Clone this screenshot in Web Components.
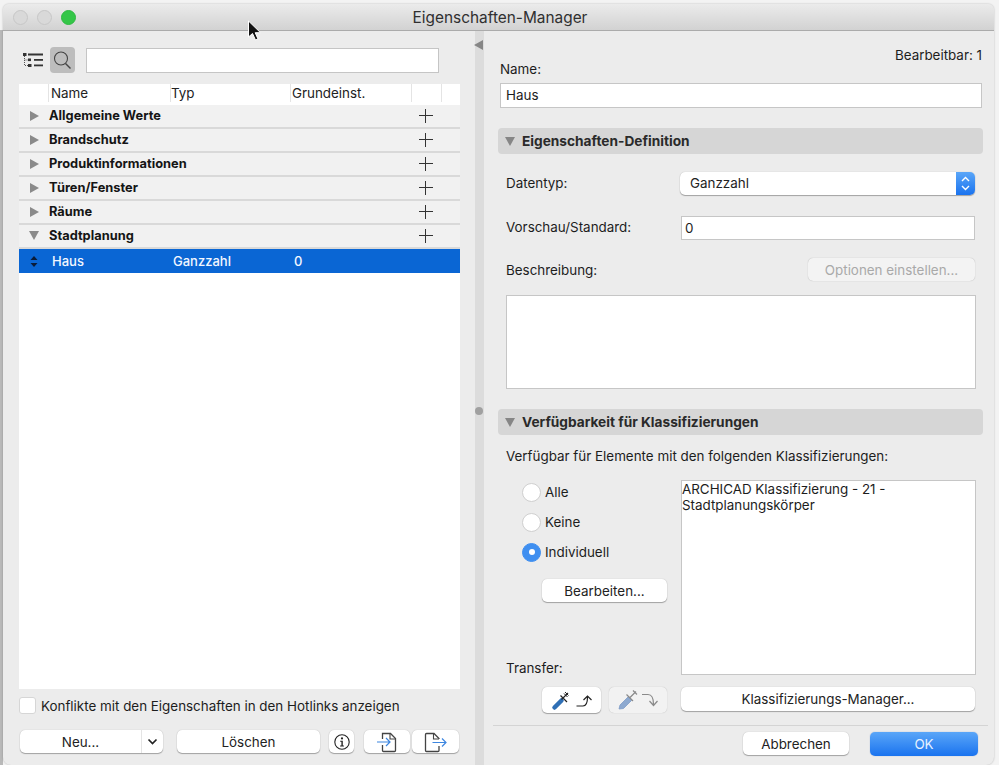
<!DOCTYPE html>
<html>
<head>
<meta charset="utf-8">
<title>Eigenschaften-Manager</title>
<style>
  html, body { margin: 0; padding: 0; height: 100%; background: #f3f3f3; overflow: hidden; }
  body { font: 13.4px Inter, "Liberation Sans", sans-serif; color: #1d1d1d; }
</style>
</head>
<body>
<manager-window>
  <prop-panel slot="left">
    <group-row>Allgemeine Werte</group-row>
    <group-row>Brandschutz</group-row>
    <group-row>Produktinformationen</group-row>
    <group-row>Türen/Fenster</group-row>
    <group-row>Räume</group-row>
    <group-row open>Stadtplanung</group-row>
    <selected-row name="Haus" type="Ganzzahl" value="0"></selected-row>
  </prop-panel>
  <detail-panel slot="right"></detail-panel>
</manager-window>

<script>
// Small icons, shared by several components
const ICONS = {
  list: `<svg width="20" height="16" viewBox="0 0 20 16"><g fill="#333"><rect x="0" y="1" width="3.500" height="3"/><rect x="5" y="1.500" width="15" height="2"/><rect x="5" y="6.500" width="3" height="2.600"/><rect x="11" y="7" width="9" height="1.800"/><rect x="5" y="12" width="3.500" height="3"/><rect x="11" y="12.500" width="9" height="1.800"/></g><path d="M1.500 4V13.500H5M1.500 8H5" fill="none" stroke="#555" stroke-dasharray="1 1"/></svg>`,
  search: `<svg width="20" height="20" viewBox="0 0 20 20" fill="none" stroke="#444" stroke-width="1.100"><circle cx="8" cy="8.500" r="6.500"/><path d="M12.500 13.500L17.500 18.500" stroke-width="1.400"/></svg>`,
  chevron: `<svg width="11" height="8" viewBox="0 0 11 8" fill="none" stroke="#222" stroke-width="1.700"><path d="M1.500 1.500L5.500 5.500L9.500 1.500"/></svg>`,
  info: `<svg width="18" height="18" viewBox="0 0 18 18"><circle cx="9" cy="9" r="7.200" fill="none" stroke="#222" stroke-width="1.100"/><circle cx="9" cy="5.400" r="1.100" fill="#222"/><path d="M7.200 7.800h2.600v4.800h1.100v.9H7.100v-.9h1.300V8.700H7.200z" fill="#222"/></svg>`,
  import: `<svg width="30" height="22" viewBox="0 0 30 22" fill="none"><path d="M10.500 8V2.500H18.500L23.500 7.500V19.500C23.500 20 23 20.500 22.500 20.500H11.500C11 20.500 10.500 20 10.500 19.500V14" stroke="#444" stroke-width="1.300"/><path d="M18 2.500V8H23.500" stroke="#444" stroke-width="1.100"/><path d="M5 11H18M14 7L18 11L14 15" stroke="#3d86e0" stroke-width="1.200"/></svg>`,
  export: `<svg width="30" height="22" viewBox="0 0 30 22" fill="none"><path d="M18 15V19.500C18 20 17.500 20.500 17 20.500H5.500C5 20.500 4.500 20 4.500 19.500V3.500C4.500 3 5 2.500 5.500 2.500H13L18 7.500V8" stroke="#444" stroke-width="1.300"/><path d="M12.500 2.500V8H18" stroke="#444" stroke-width="1.100"/><path d="M11.500 11.500H25M21 7.500L25 11.500L21 15.500" stroke="#3d86e0" stroke-width="1.200"/></svg>`,
  pick: `<svg width="44" height="24" viewBox="0 0 44 24" fill="none"><path d="M4.500 19.500L11.500 12.500" stroke="#2f6fb5" stroke-width="4.500" stroke-linecap="round"/><path d="M10.500 7.500L17 14M11.500 11.500L18 5" stroke="#222" stroke-width="1.200"/><path d="M14 5.500L17.500 9M15 4L18.500 7.500" stroke="#222" stroke-width="1"/><path d="M26.500 18H33C36 18 37.500 15 37.500 9M33.500 12L37.500 8L41.500 12" stroke="#222" stroke-width="1.200"/></svg>`,
  drop: `<svg width="44" height="24" viewBox="0 0 44 24" fill="none"><path d="M3 21L4 17L12 9L15.500 12.500L7.500 20.500Z" fill="#8da9d0" stroke="#7f9cc6" stroke-width=".8"/><path d="M10.500 6.500L17 13M14 9.500L20 3.500M17 2.500L21 6.500" stroke="#8a8a8a" stroke-width="1.200"/><path d="M26 6.500H32C36 6.500 37.500 10 37.500 16.500M33.500 13L37.500 17.500L41.500 13" stroke="#8a8a8a" stroke-width="1.200"/></svg>`
};

class ManagerWindow extends HTMLElement {
  constructor() {
    super();
    const template = document.createElement("template");
    template.innerHTML = `
      <style>
        :host { display: block; position: relative; width: 999px; height: 765px; overflow: hidden; }
        .win {
          height: 761px; margin: 4px 0 0 3px; width: 991px;
          display: flex; flex-direction: column;
          background: #ececec;
          border-radius: 6px 6px 8px 8px;
          box-shadow: 0 0 2px rgba(0,0,0,.25);
          overflow: hidden;
          position: relative;
        }
        .edge-l { position: absolute; left: 0; top: 30px; bottom: 0; width: 3px; background: #b9b9b9; }
        .title {
          height: 26px; flex: none;
          display: flex; align-items: center; justify-content: center;
          background: linear-gradient(#ebebeb, #d2d2d2);
          border-bottom: 1px solid #ababab;
          position: relative;
          font-size: 15.400px; color: #303030;
          padding-left: 3px;
        }
        .lights { position: absolute; left: 10px; top: 6px; display: flex; gap: 9px; }
        .lights i { width: 15px; height: 15px; border-radius: 50%; background: #d9d9d9; border: 1px solid #c6c6c6; box-sizing: border-box; }
        .lights i:last-child { background: #34c648; border-color: #2eb841; }
        .body { flex: 1; display: flex; min-height: 0; }
        .split {
          width: 9px; flex: none; background: #dcdcdc; position: relative;
        }
        .split::before {
          content: ""; position: absolute; left: -1px; top: 9px;
          border: 5px solid transparent; border-left: 0; border-right: 9px solid #868686;
        }
        .split::after {
          content: ""; position: absolute; left: 0; top: 376px;
          width: 8px; height: 8px; border-radius: 50%; background: #a0a0a0;
        }
        ::slotted([slot="left"]) { width: 472px; flex: none; }
        ::slotted([slot="right"]) { flex: 1; min-width: 0; }
        .cursor { position: absolute; left: 247px; top: 20px; }
      </style>
      <div class="edge-l"></div>
      <div class="win">
        <div class="title">
          <div class="lights"><i></i><i></i><i></i></div>
          Eigenschaften-Manager
        </div>
        <div class="body">
          <slot name="left"></slot>
          <div class="split"></div>
          <slot name="right"></slot>
        </div>
      </div>
      <svg class="cursor" width="15" height="22" viewBox="0 0 15 22">
        <path d="M1.500 1V17L5.500 13.500L8.500 20L11 19L8.200 12.700H13.500Z" fill="#111" stroke="#fff" stroke-width="1"/>
      </svg>`;
    this.attachShadow({ mode: "open" });
    this.shadowRoot.appendChild(template.content.cloneNode(true));
  }
}

class MacButton extends HTMLElement {
  constructor() {
    super();
    const template = document.createElement("template");
    template.innerHTML = `
      <style>
        :host {
          display: flex; align-items: center; justify-content: center;
          box-sizing: border-box; height: 23px;
          background: #fff; border-radius: 5px;
          box-shadow: 0 1px 1px rgba(0,0,0,.3), 0 0 1px rgba(0,0,0,.25);
          color: #222; white-space: nowrap;
        }
        :host([disabled]) { background: #f3f3f3; color: #a9a9a9; box-shadow: 0 0 1px rgba(0,0,0,.3); }
        :host([primary]) {
          background: linear-gradient(#5aa6f8, #1a73ef); color: #e8f2ff;
          box-shadow: 0 0 1px rgba(0,60,160,.5);
        }
      </style>
      <slot></slot>`;
    this.attachShadow({ mode: "open" });
    this.shadowRoot.appendChild(template.content.cloneNode(true));
  }
}

class GroupRow extends HTMLElement {
  constructor() {
    super();
    const arrow = this.hasAttribute("open") ? "open" : "";
    const template = document.createElement("template");
    template.innerHTML = `
      <style>
        :host {
          display: flex; align-items: center; box-sizing: border-box;
          height: 24px; background: #f1f1f1; border-bottom: 2px solid #d9d9d9;
          font-weight: 700; font-size: 12.850px; color: #151515; padding-bottom: 1px;
        }
        .tri { width: 0; height: 0; margin: 0 7px 0 11px; border-style: solid; border-color: transparent; border-width: 5px 0 5px 9px; border-left-color: #8a8a8a; }
        .tri.open { border-width: 9px 5px 0 5px; border-color: #8a8a8a transparent transparent; margin: 0 7px 0 10px; }
        .name { flex: 1; margin-left: 3px; }
        .plus { width: 14px; height: 14px; margin-right: 27px; position: relative; }
        .plus::before, .plus::after { content: ""; position: absolute; background: #333; }
        .plus::before { left: 0; right: 0; top: 6px; height: 1px; }
        .plus::after { top: 0; bottom: 0; left: 6px; width: 1px; }
      </style>
      <span class="tri ${arrow}"></span>
      <span class="name"><slot></slot></span>
      <span class="plus"></span>`;
    this.attachShadow({ mode: "open" });
    this.shadowRoot.appendChild(template.content.cloneNode(true));
  }
}

class SelectedRow extends HTMLElement {
  constructor() {
    super();
    const template = document.createElement("template");
    template.innerHTML = `
      <style>
        :host {
          display: grid; grid-template-columns: 33px 121px 121px 1fr; align-items: center;
          height: 24px; background: #0a66d4; color: #f2f7ff; font-weight: 500; font-size: 13px;
          box-sizing: border-box;
        }
        svg { margin-left: 11px; }
        span { white-space: nowrap; }
      </style>
      <svg width="8" height="11" viewBox="0 0 8 11"><path d="M4 0L7.500 4H.5zM4 11L.5 7H7.500z" fill="#0b1c38"/></svg>
      <span class="name"></span><span class="type"></span><span class="value"></span>`;
    this.attachShadow({ mode: "open" });
    this.shadowRoot.appendChild(template.content.cloneNode(true));
  }
  connectedCallback() {
    this.shadowRoot.querySelector(".name").textContent = this.getAttribute("name");
    this.shadowRoot.querySelector(".type").textContent = this.getAttribute("type");
    this.shadowRoot.querySelector(".value").textContent = this.getAttribute("value");
  }
}

class PropPanel extends HTMLElement {
  constructor() {
    super();
    const template = document.createElement("template");
    template.innerHTML = `
      <style>
        :host { display: flex; flex-direction: column; box-sizing: border-box; padding: 0 15px 12px 16px; }
        .tools { display: flex; align-items: center; height: 26px; margin-top: 16px; }
        .tools .list { width: 20px; display: flex; margin-left: 4px; }
        .tools .find {
          width: 25px; height: 26px; margin-left: 7px; background: #bdbdbd; border-radius: 4px;
          display: flex; align-items: center; justify-content: center;
        }
        .tools input {
          margin-left: 11px; width: 353px; height: 25px; box-sizing: border-box;
          border: 1px solid #c5c5c5; background: #fff; outline: 0;
        }
        .table { flex: 1; margin-top: 11px; background: #fff; display: flex; flex-direction: column; }
        .head {
          display: grid; grid-template-columns: 29px 122px 120px 121px 30px 1fr;
          height: 21px; align-items: start; background: #fff;
        }
        .head span { border-left: 1px solid #e4e4e4; height: 18px; line-height: 18px; color: #222; }
        .head span:first-child { border: 0; }
        .head span:nth-child(2) { padding-left: 2px; }
        .head span:nth-child(4) { padding-left: 1px; }
        .check { display: flex; align-items: center; gap: 5px; margin-top: 8px; height: 17px; }
        .check i { width: 17px; height: 17px; box-sizing: border-box; background: #fff; border-radius: 3px; border: 1px solid #d6d6d6; }
        .buttons { display: flex; margin-top: 16px; height: 23px; margin-left: 1px; }
        .split { width: 143px; display: flex; margin-right: 14px; }
        .split b { flex: 1; font-weight: 400; text-align: center; }
        .split em { width: 21px; height: 100%; display: flex; align-items: center; justify-content: center; border-left: 1px solid #e4e4e4; }
        .del { width: 143px; margin-right: 9px; }
        .info { width: 25px; margin-right: 10px; }
        .imp { width: 46px; margin-right: 2px; }
        .exp { width: 47px; }
      </style>
      <div class="tools">
        <span class="list">${ICONS.list}</span>
        <span class="find">${ICONS.search}</span>
        <input type="text">
      </div>
      <div class="table">
        <div class="head"><span></span><span>Name</span><span>Typ</span><span>Grundeinst.</span><span></span><span></span></div>
        <slot></slot>
      </div>
      <div class="check"><i></i>Konflikte mit den Eigenschaften in den Hotlinks anzeigen</div>
      <div class="buttons">
        <mac-button class="split"><b>Neu...</b><em>${ICONS.chevron}</em></mac-button>
        <mac-button class="del">Löschen</mac-button>
        <mac-button class="info">${ICONS.info}</mac-button>
        <mac-button class="imp">${ICONS.import}</mac-button>
        <mac-button class="exp">${ICONS.export}</mac-button>
      </div>`;
    this.attachShadow({ mode: "open" });
    this.shadowRoot.appendChild(template.content.cloneNode(true));
  }
}

class SectionHeader extends HTMLElement {
  constructor() {
    super();
    const template = document.createElement("template");
    template.innerHTML = `
      <style>
        :host {
          display: flex; align-items: center; height: 26px; width: 485px;
          background: #d6d6d6; border-radius: 4px; font-weight: 700; font-size: 13.700px; color: #2a2a2a;
        }
        i { width: 0; height: 0; border-style: solid; border-width: 9px 5px 0 5px; border-color: #868686 transparent transparent; margin: 0 7px 0 7px; }
      </style>
      <i></i><slot></slot>`;
    this.attachShadow({ mode: "open" });
    this.shadowRoot.appendChild(template.content.cloneNode(true));
  }
}

class RadioItem extends HTMLElement {
  constructor() {
    super();
    const template = document.createElement("template");
    template.innerHTML = `
      <style>
        :host { display: flex; align-items: center; gap: 4px; height: 20px; }
        i { width: 19px; height: 19px; box-sizing: border-box; border-radius: 50%; background: #fff; border: 1px solid #cfcfcf; display: flex; align-items: center; justify-content: center; }
        :host([checked]) i { background: #3f8ff0; border-color: #3f8ff0; }
        :host([checked]) i::after { content: ""; width: 6px; height: 6px; border-radius: 50%; background: #fff; }
      </style>
      <i></i><slot></slot>`;
    this.attachShadow({ mode: "open" });
    this.shadowRoot.appendChild(template.content.cloneNode(true));
  }
}

class DetailPanel extends HTMLElement {
  constructor() {
    super();
    const template = document.createElement("template");
    template.innerHTML = `
      <style>
        :host { display: block; box-sizing: border-box; padding: 0 8px 0 14px; position: relative; }
        .editable { text-align: right; margin-top: 16px; height: 16px; line-height: 16px; padding-right: 4px; }
        .lbl { line-height: 16px; height: 16px; }
        .box { box-sizing: border-box; background: #fff; border: 1px solid #c6c6c6; display: block; }
        .name-lbl { margin: -2px 0 6px 2px; }
        .name-in { height: 25px; width: 482px; margin-left: 2px; padding: 3px 5px; line-height: 17px; }
        section-header { margin-top: 20px; }
        .inner { padding-left: 8px; }
        .row { display: flex; justify-content: space-between; align-items: center; width: 469px; }
        .r1 { margin-top: 17px; height: 24px; }
        .r2 { margin-top: 21px; height: 24px; }
        .r2 > span { padding-bottom: 3px; }
        .r3 { margin-top: 18px; height: 23px; }
        .sel { width: 295px; height: 23px; display: flex; padding-left: 10px; justify-content: space-between; box-sizing: border-box; }
        .sel b { width: 19px; height: 23px; font-weight: 400; border-radius: 0 5px 5px 0; background: linear-gradient(#5aa6f8, #1a73ef); display: flex; align-items: center; justify-content: center; }
        .val { width: 294px; height: 24px; padding: 3px; line-height: 17px; }
        .opt { width: 167px; }
        .desc { width: 470px; height: 94px; margin-top: 14px; }
        .avail { margin-top: 13px; height: 16px; line-height: 16px; }
        .cols { display: flex; margin-top: 16px; width: 470px; }
        .left { width: 175px; flex: none; position: relative; }
        radio-item { margin: 2px 0 8px 16px; }
        .radios { display: flex; flex-direction: column; }
        .edit { width: 125px; margin: 9px 0 0 36px; height: 23px; }
        .transfer { margin-top: 58px; height: 16px; line-height: 16px; }
        .list { width: 295px; height: 195px; padding: 0; line-height: 16px; }
        .bottom { display: flex; margin-top: 11px; width: 469px; justify-content: flex-end; align-items: flex-start; }
        .t1, .t2 { height: 26px; }
        .t1 { width: 59px; margin-right: 8px; }
        .t2 { width: 58px; margin-right: 14px; background: #f2f2f2; box-shadow: 0 0 1px rgba(0,0,0,.25); }
        .mgr { width: 294px; height: 24px; padding-bottom: 1px; }
        hr { border: 0; height: 1px; background: #d4d4d4; margin: 12px 0 0 -5px; width: 495px; }
        .foot { display: flex; justify-content: flex-end; align-items: flex-start; margin-top: 6px; padding-right: 8px; }
        .foot mac-button { width: 106px; height: 23px; }
        .foot .ok { width: 108px; height: 24px; margin-left: 21px; }
      </style>
      <div class="editable">Bearbeitbar: 1</div>
      <div class="lbl name-lbl">Name:</div>
      <div class="box name-in">Haus</div>
      <section-header>Eigenschaften-Definition</section-header>
      <div class="inner">
        <div class="row r1"><span>Datentyp:</span>
          <mac-button class="sel"><span>Ganzzahl</span><b><svg width="9" height="15" viewBox="0 0 9 15" fill="none" stroke="#fff" stroke-width="1.400"><path d="M1 5L4.500 1.500L8 5M1 10L4.500 13.500L8 10"/></svg></b></mac-button>
        </div>
        <div class="row r2"><span>Vorschau/Standard:</span><div class="box val">0</div></div>
        <div class="row r3"><span>Beschreibung:</span><mac-button class="opt" disabled>Optionen einstellen...</mac-button></div>
        <div class="box desc"></div>
      </div>
      <section-header>Verfügbarkeit für Klassifizierungen</section-header>
      <div class="inner">
        <div class="avail">Verfügbar für Elemente mit den folgenden Klassifizierungen:</div>
        <div class="cols">
          <div class="left">
            <div class="radios">
              <radio-item>Alle</radio-item>
              <radio-item>Keine</radio-item>
              <radio-item checked>Individuell</radio-item>
            </div>
            <mac-button class="edit">Bearbeiten...</mac-button>
            <div class="transfer">Transfer:</div>
          </div>
          <div class="box list">ARCHICAD Klassifizierung - 21 -<br>Stadtplanungskörper</div>
        </div>
        <div class="bottom">
          <mac-button class="t1">${ICONS.pick}</mac-button>
          <mac-button class="t2">${ICONS.drop}</mac-button>
          <mac-button class="mgr">Klassifizierungs-Manager...</mac-button>
        </div>
      </div>
      <hr>
      <div class="foot">
        <mac-button>Abbrechen</mac-button>
        <mac-button class="ok" primary>OK</mac-button>
      </div>`;
    this.attachShadow({ mode: "open" });
    this.shadowRoot.appendChild(template.content.cloneNode(true));
  }
}

customElements.define("mac-button", MacButton);
customElements.define("group-row", GroupRow);
customElements.define("selected-row", SelectedRow);
customElements.define("section-header", SectionHeader);
customElements.define("radio-item", RadioItem);
customElements.define("prop-panel", PropPanel);
customElements.define("detail-panel", DetailPanel);
customElements.define("manager-window", ManagerWindow);
</script>
</body>
</html>
